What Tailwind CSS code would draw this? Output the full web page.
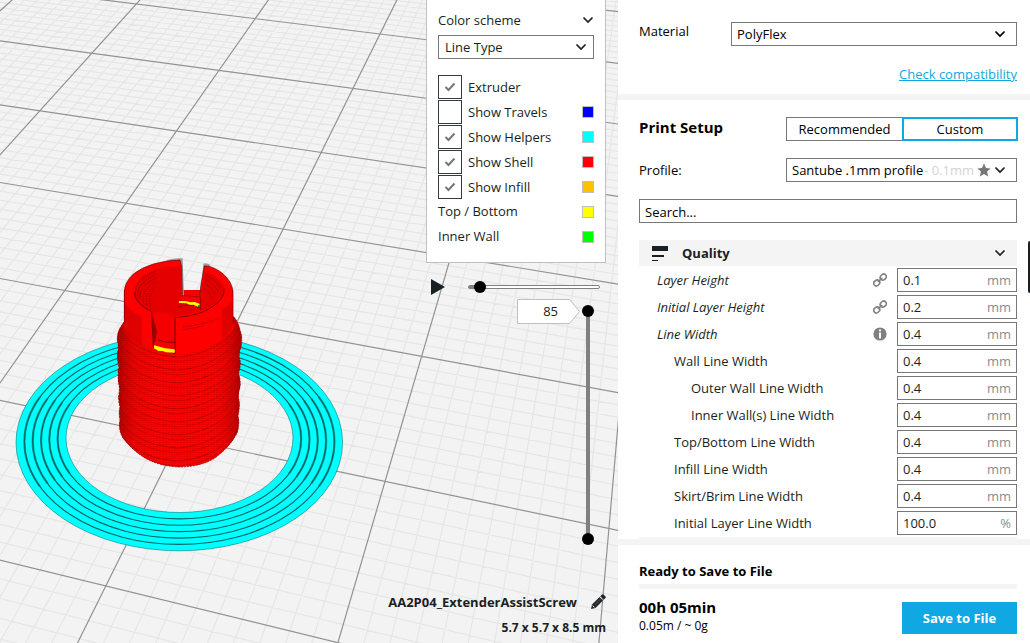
<!DOCTYPE html>
<html lang="en">
<head>
<meta charset="utf-8">
<title>Print preview</title>
<script src="https://cdn.jsdelivr.net/npm/@tailwindcss/browser@4"></script>
</head>
<body class="flex h-screen overflow-hidden bg-white font-['Open_Sans',sans-serif] text-[13px] leading-6 text-[#191f22]">
<svg class="hidden">
  <symbol id="chevron" viewBox="0 0 12 8"><path d="M1.500 1.500 6 6l4.500-4.500" fill="none" stroke="currentColor" stroke-width="1.700"/></symbol>
  <symbol id="check" viewBox="0 0 12 10"><path d="M1.500 5l3 3L10.500 1.500" fill="none" stroke="#777" stroke-width="2"/></symbol>
  <symbol id="link" viewBox="0 0 14 14"><g fill="none" stroke="#808080" stroke-width="1.600" transform="rotate(-42 7 7)"><rect x="-.6" y="4.400" width="6.400" height="5.200" rx="2.600"/><rect x="8.200" y="4.400" width="6.400" height="5.200" rx="2.600"/><path d="M4 7h6"/></g></symbol>
</svg>

<main class="relative min-w-0 flex-1 overflow-hidden bg-[#f3f3f3]">
  <svg class="absolute inset-0 h-[643px] w-[618px]" viewBox="0 0 618 643" role="img" aria-label="Sliced model on the build plate">
    <path id="minor" fill="none" stroke="#e6e6e6" stroke-width="1.200"/>
    <path id="major" fill="none" stroke="#929294" stroke-width="1.200"/>
    <path fill="#0ff" stroke="#047c7c" stroke-width=".6" fill-rule="evenodd" d="M16 442.500a163.300 108.300 0 1 0 326.600 0a163.300 108.300 0 1 0-326.600 0zM66 438a113.500 74.500 0 1 0 227 0a113.500 74.500 0 1 0-227 0z"/>
    <g id="seams" fill="none" stroke="#006464"></g>
    <defs>
      <clipPath id="bodyClip"><path d="M124 290V322Q116 332 117.500 341Q119 347 117.500 353Q117 361 119 367Q117.500 374 118.500 382Q120 388 119 394Q118 401 120 407Q118.500 414 120 420Q118 430 123 438Q132 450 145 458Q160 466.500 180 467Q202 466.500 215 458Q230 447 237 433Q240 424 238 416Q240 408 239 400Q237.500 395 240 387Q241 380 238.500 374Q241 366 240 360Q238 354 241 347Q243 338 240 330Q238 321 233 316V290Z"/></clipPath>
      <linearGradient id="side"><stop offset="0" stop-color="#500" stop-opacity=".5"/><stop offset=".14" stop-color="#a00" stop-opacity=".2"/><stop offset=".4" stop-color="red" stop-opacity="0"/><stop offset=".75" stop-color="red" stop-opacity="0"/><stop offset="1" stop-color="#500" stop-opacity=".45"/></linearGradient>
      <pattern id="layers" width="3" height="2" patternUnits="userSpaceOnUse"><path d="M0 0h2v.8H0z" fill="#a00000" opacity=".32"/></pattern>
    </defs>
    <g clip-path="url(#bodyClip)">
      <path fill="red" d="M110 280h140v195H110z"/>
      <g id="threads" fill="none"></g>
      <path fill="url(#layers)" d="M110 280h140v195H110z"/>
      <path fill="url(#side)" d="M117 280h124v190H117z"/>
    </g>
    <path fill="none" stroke="#900" stroke-width=".7" stroke-dasharray="2 1" d="M124 322Q116 332 117.500 341Q119 347 117.500 353Q117 361 119 367Q117.500 374 118.500 382Q120 388 119 394Q118 401 120 407Q118.500 414 120 420Q118 430 123 438Q132 450 145 458Q160 466.500 180 467Q202 466.500 215 458Q230 447 237 433Q240 424 238 416Q240 408 239 400Q237.500 395 240 387Q241 380 238.500 374Q241 366 240 360Q238 354 241 347Q243 338 240 330Q238 321 233 316"/>
    <svg x="100" y="250" width="160" height="120" viewBox="0 0 480 360">
      <path fill="#9c9c9c" d="M200 30Q225 24 248 25L252 140H300L310 42Q316 36 330 44L312 150H240z"/>
      <path fill="red" d="M73 230V125Q73 98 100 72Q150 33 240 30L245 50 247 137 300 141 302 110 313 48Q335 46 365 68Q398 94 399 128V240Q330 310 228 312L160 295Q95 270 73 230z"/>
      <path fill="none" stroke="#600" stroke-width="2" d="M73 220V125Q73 98 100 72Q150 33 240 30L245 50 247 137 300 141 302 110 313 48Q335 46 365 68Q398 94 399 128V220"/>
      <path fill="#e40000" d="M103 128Q103 88 150 64Q190 48 244 48L247 137 300 141 313 65Q350 72 366 99Q382 132 352 160Q310 190 226 198V285H165V245L155 188Q103 166 103 128z"/>
      <g fill="none" stroke="#760000" stroke-width="2" stroke-dasharray="5 3">
        <path d="M106 135Q103 87 165 65"/><path d="M113 139Q110 97 168 74"/><path d="M120 148Q115 105 170 84"/><path d="M130 158Q124 118 168 95"/><path d="M141 165Q132 130 166 110"/><path d="M152 172Q143 143 160 124"/>
        <path d="M316 77Q350 89 362 116"/><path d="M315 89Q345 100 354 126"/><path d="M313 101Q338 111 344 134"/><path d="M312 114Q330 124 334 142"/>
        <path d="M248 231Q310 224 360 204"/><path d="M248 240Q280 236 310 227"/>
      </g>
      <path fill="#b00000" opacity=".4" d="M75 160Q90 184 125 199V285Q90 265 75 230zM398 155V235Q370 265 365 266V180z"/>
      <path fill="red" d="M240 148 300 158V145L247 140z"/>
      <path fill="#ff0" d="M238 153l18 0 16 4 12-1 15 5v10l-15-2-2-5-14 1-8-5-24-1z"/>
      <path fill="#0a0" d="M294 165h6v6h-6z"/>
      <path fill="none" stroke="#700" stroke-width="2" d="M234 171Q270 158 300 174M301 141V180"/>
      <path fill="#f40000" d="M155 190 160 292 226 310V200Q190 182 155 190z"/>
      <path fill="#a00000" d="M157 195 171 242 166 274 160 286z"/>
      <path fill="none" stroke="#600" stroke-width="2.500" d="M103 128Q104 158 153 184M225 312V203Q305 198 348 163Q375 140 372 116M174 270Q195 279 224 277M155 188 160 291 225 310"/>
      <path fill="#ff0" d="M162 286l28 7 4 2 30 3v10l-26-1-10-4-12 0-14-8z"/>
    </svg>
  </svg>

  <div class="absolute inset-y-0 right-3 flex flex-col items-end">
    <section class="flex w-[180px] flex-col border border-t-0 border-[#c0c0c0] bg-white px-[11px] pt-2 pb-[13px]">
      <button class="flex h-6 items-center justify-between text-left">Color scheme<svg class="h-2 w-3"><use href="#chevron"/></svg></button>
      <div class="relative mt-[3px]">
        <select aria-label="Color scheme" class="block h-6 w-full appearance-none border border-[#777] bg-white px-1.5 leading-5"><option>Line Type</option></select>
        <svg class="pointer-events-none absolute top-2 right-[7px] h-2 w-3"><use href="#chevron"/></svg>
      </div>
      <div class="mt-4 flex flex-col gap-px">
        <label class="flex h-6 items-center gap-1.5"><span class="relative flex"><input type="checkbox" checked class="size-6 appearance-none border border-[#333b40] bg-white"><svg class="pointer-events-none absolute top-[7px] left-1.5 h-[10px] w-3"><use href="#check"/></svg></span>Extruder</label>
        <label class="flex h-6 items-center gap-1.5"><input type="checkbox" class="size-6 appearance-none border border-[#333b40] bg-white">Show Travels<span class="ml-auto size-3 border border-[#c0c0c0] bg-[#00f]"></span></label>
        <label class="flex h-6 items-center gap-1.5"><span class="relative flex"><input type="checkbox" checked class="size-6 appearance-none border border-[#333b40] bg-white"><svg class="pointer-events-none absolute top-[7px] left-1.5 h-[10px] w-3"><use href="#check"/></svg></span>Show Helpers<span class="ml-auto size-3 border border-[#c0c0c0] bg-[#0ff]"></span></label>
        <label class="flex h-6 items-center gap-1.5"><span class="relative flex"><input type="checkbox" checked class="size-6 appearance-none border border-[#333b40] bg-white"><svg class="pointer-events-none absolute top-[7px] left-1.5 h-[10px] w-3"><use href="#check"/></svg></span>Show Shell<span class="ml-auto size-3 border border-[#c0c0c0] bg-[#f00]"></span></label>
        <label class="flex h-6 items-center gap-1.5"><span class="relative flex"><input type="checkbox" checked class="size-6 appearance-none border border-[#333b40] bg-white"><svg class="pointer-events-none absolute top-[7px] left-1.5 h-[10px] w-3"><use href="#check"/></svg></span>Show Infill<span class="ml-auto size-3 border border-[#c0c0c0] bg-[#ffc000]"></span></label>
        <p class="flex h-6 items-center justify-between leading-[22px]"><span class="pb-0.5">Top / Bottom</span><span class="size-3 border border-[#c0c0c0] bg-[#ff0]"></span></p>
        <p class="flex h-6 items-center justify-between leading-[22px]"><span class="pb-0.5">Inner Wall</span><span class="size-3 border border-[#c0c0c0] bg-[#0f0]"></span></p>
      </div>
    </section>

    <div class="mt-4 mr-1.5 flex items-center gap-[23px]">
      <button aria-label="Play" class="block"><svg class="h-4 w-[14px]" viewBox="0 0 14 16"><path d="M0 0v16l14-8z" fill="#191f22"/></svg></button>
      <div class="relative h-3 w-[132px]">
        <div class="mt-1 h-[4px] rounded-full border border-[#808080] bg-white"><div class="h-full w-1.5 bg-[#808080]"></div></div>
        <span class="absolute top-0 left-1.5 size-3 rounded-full bg-black"></span>
        <input type="range" aria-label="Path position" min="0" max="100" value="5" class="absolute inset-0 w-full opacity-0">
      </div>
    </div>

    <div class="mt-1 mr-3 flex items-start">
      <div class="relative">
        <svg class="h-[25px] w-[65px]" viewBox="0 0 65 25"><path d="M.5.500h52l10 12-10 12H.5z" fill="#fff" stroke="#c0c0c0"/></svg>
        <input aria-label="Layer" value="85" class="absolute top-0 left-0 h-6 w-[41px] bg-transparent text-right outline-none">
      </div>
      <div class="relative mt-1.5 flex h-[240px] w-3 flex-col items-center py-1.5">
        <div class="w-1 flex-1 bg-[#808080]"></div>
        <span class="absolute top-0 left-0 size-3 rounded-full bg-black"></span>
        <span class="absolute bottom-0 left-0 size-3 rounded-full bg-black"></span>
        <input type="range" aria-label="Visible layers" min="0" max="85" value="85" class="absolute inset-0 h-full w-3 opacity-0">
      </div>
    </div>

    <div class="mt-auto pb-[3px] text-right font-bold">
      <div class="flex items-center justify-end gap-[13px]">AA2P04_ExtenderAssistScrew
        <button aria-label="Rename"><svg class="block size-4" viewBox="0 0 16 16" fill="#22282c"><path d="M1 15l1-4.500L9.500 3l3.500 3.500L5.500 14z"/><path d="M10.200 2.300 12 .5q.8-.6 1.500 0l2 2q.6.700 0 1.500L13.700 5.800z"/><path d="M2.600 11.600l1.800 1.800" stroke="#f3f3f3" stroke-width="1"/><path d="M5 10.500 10 5.500" stroke="#777" stroke-width=".7"/></svg></button>
      </div>
      <p class="mt-0.5 text-[12px]">5.7 x 5.7 x 8.5 mm</p>
    </div>
  </div>
</main>

<aside class="relative flex w-2/5 flex-col text-black">
  <section class="pt-[22px] pr-[13px] pb-[7px] pl-[21px]">
    <div class="flex">
      <label for="material" class="w-[92px] leading-[18px]">Material</label>
      <div class="relative flex-1">
        <select id="material" class="block h-6 w-full appearance-none border border-[#777] bg-white px-[5px] leading-5"><option>PolyFlex</option></select>
        <svg class="pointer-events-none absolute top-2 right-[11px] h-2 w-3"><use href="#chevron"/></svg>
      </div>
    </div>
    <p class="mt-4 text-right"><a href="#" class="text-[#0fa8e2] underline">Check compatibility</a></p>
  </section>
  <div class="mt-px h-1.5 bg-[#f4f4f4]"></div>

  <section class="flex flex-col pt-[17px] pr-[13px] pl-[21px]">
    <div class="flex justify-between">
      <h2 class="text-[15px] leading-5 font-bold">Print Setup</h2>
      <div class="-mr-px flex">
        <button class="h-6 w-[116px] border border-r-0 border-[#777] leading-5">Recommended</button>
        <button class="h-6 w-[116px] border-2 border-[#0fa8e2] leading-5">Custom</button>
      </div>
    </div>
    <div class="mt-[17px] flex justify-between">
      <label for="profile">Profile:</label>
      <div class="relative w-[231px]">
        <select id="profile" class="block h-6 w-full appearance-none border border-[#777] bg-white px-[5px] leading-5"><option>Santube .1mm profile</option></select>
        <div class="pointer-events-none absolute inset-y-0 right-[11px] flex items-center gap-[3px] text-[#d3d3d3]">- 0.1mm
          <svg class="size-[14px]" viewBox="0 0 14 14"><path fill="#777" d="M7 .5l2 4.400 4.600.5-3.500 3.200 1 4.900L7 11l-4.100 2.500 1-4.900L.4 5.400 5 4.900z"/></svg>
          <svg class="h-2 w-3 text-[#191f22]"><use href="#chevron"/></svg>
        </div>
      </div>
    </div>
    <input type="text" aria-label="Search settings" placeholder="Search..." class="mt-[17px] h-6 border border-[#777] px-[5px] pt-0.5 placeholder:text-black">

    <button class="mt-[17px] flex h-[26px] items-center bg-[#f4f4f4] pr-[11px] pl-[13px] font-bold text-[#191f22]">
      <svg class="mr-[14px] h-[15px] w-4" viewBox="0 0 16 15" fill="#191f22"><path d="M0 0h16v5H0zM0 9h12v2H0zM0 14h6v1H0z"/></svg>Quality
      <svg class="ml-auto h-2 w-3"><use href="#chevron"/></svg>
    </button>
    <div id="settings" class="mt-0.5 flex flex-col gap-[3px] text-[#191f22]"></div>
    <div class="mt-0.5 h-0.5 bg-[#f4f4f4]"></div>
  </section>
  <div class="h-1.5 bg-[#f4f4f4]"></div>

  <section class="pt-[14px] pr-[13px] pl-[21px]">
    <h2 class="font-bold">Ready to Save to File</h2>
    <div class="mt-px h-[5px] bg-[#f4f4f4]"></div>
    <div class="flex items-start justify-between pt-2">
      <div><p class="text-[15px] leading-5 font-bold">00h 05min</p><p class="text-[12px] leading-[18px]">0.05m / ~ 0g</p></div>
      <button class="mt-[5px] h-8 w-[115px] bg-[#0fa8e2] font-bold text-white">Save to File</button>
    </div>
  </section>
  <span class="absolute top-[241px] right-0 h-[52px] w-0.5 rounded-l-sm bg-[#191f22]"></span>
</aside>

<script type="module">
  // Perspective projection of build plate coordinates (in 10 mm cells) to the view.
  const project = (u, v) => {
    const d = 1 - 0.025 * u - 0.0756 * v;
    return ((380 + 118.4 * u - 53.7 * v) / d).toFixed(1) + ' ' + ((34 + 14.9 * u + 47.7 * v) / d).toFixed(1);
  };
  let major = '', minor = '';
  for (let i = -80; i <= 90; i++) {
    const v = i / 10;
    const line = 'M' + project(-8, v) + 'L' + project(4, v);
    if (i % 10) minor += line; else major += line;
  }
  for (let i = -70; i <= 60; i++) {
    const u = i / 10;
    const line = 'M' + project(u, -8) + 'L' + project(u, 8);
    if (i % 10) minor += line; else major += line;
  }
  document.getElementById('minor').setAttribute('d', minor);
  document.getElementById('major').setAttribute('d', major);

  let seams = '';
  for (let k = 1; k < 6; k++) {
    const t = k / 6, rx = 163.3 - 49.8 * t, ry = 108.3 - 33.8 * t, cy = 442.5 - 4.5 * t;
    seams += `<ellipse cx="179.400" cy="${cy}" rx="${rx}" ry="${ry}" stroke-width="1.200"/>`;
    seams += `<path stroke-width="2.200" stroke-opacity=".6" d="M${179.4 - rx * .9} ${cy - ry * .436}A${rx} ${ry} 0 0 0 ${179.4 - rx * .9} ${cy + ry * .436}M${179.4 + rx * .9} ${cy - ry * .436}A${rx} ${ry} 0 0 1 ${179.4 + rx * .9} ${cy + ry * .436}"/>`;
  }
  document.getElementById('seams').innerHTML = seams;

  let threads = '';
  for (let k = 0; k < 9; k++) {
    const y = 323 + k * 13;
    threads += `<path stroke="#b00000" stroke-width="1" stroke-dasharray="7 1" d="M117 ${y + 2}Q133 ${y + 31} 178 ${y + 34}Q224 ${y + 30} 242 ${y - 5}"/>`;
    threads += `<path stroke="#ff0000" stroke-width="3" d="M116 ${y + 4}Q133 ${y + 34} 178 ${y + 37}Q224 ${y + 33} 243 ${y - 3}"/>`;
    threads += `<path stroke="#c80000" stroke-width="1" stroke-dasharray="4 1" d="M117 ${y + 7}Q133 ${y + 36} 178 ${y + 39}Q224 ${y + 35} 242 ${y}"/>`;
  }
  document.getElementById('threads').innerHTML = threads;

  const linked = '<svg class="size-[14px]" role="img" aria-label="Linked"><use href="#link"/></svg>';
  const info = '<svg class="size-[14px]" viewBox="0 0 14 14" role="img" aria-label="Info"><circle cx="7" cy="7" r="6.600" fill="#808080"/><path d="M6 2.500h2v1.800H6zM6 5.500h2v6H6z" fill="#fff"/></svg>';
  const main = 'pl-[18px] italic', sub = 'pl-[35px]', leaf = 'pl-[52px]';
  document.getElementById('settings').innerHTML = [
    ['Layer Height', main, '0.1', 'mm', linked],
    ['Initial Layer Height', main, '0.2', 'mm', linked],
    ['Line Width', main, '0.4', 'mm', info],
    ['Wall Line Width', sub, '0.4', 'mm', ''],
    ['Outer Wall Line Width', leaf, '0.4', 'mm', ''],
    ['Inner Wall(s) Line Width', leaf, '0.4', 'mm', ''],
    ['Top/Bottom Line Width', sub, '0.4', 'mm', ''],
    ['Infill Line Width', sub, '0.4', 'mm', ''],
    ['Skirt/Brim Line Width', sub, '0.4', 'mm', ''],
    ['Initial Layer Line Width', sub, '100.0', '%', '']
  ].map(([name, indent, value, unit, icon], i) => `
    <div class="flex h-6 items-center">
      <label for="setting-${i}" class="flex-1 ${indent}">${name}</label>
      <span class="mr-[10px]">${icon}</span>
      <div class="relative w-[120px]">
        <input id="setting-${i}" value="${value}" class="block h-6 w-full border border-[#777] bg-white px-[5px]">
        <span class="pointer-events-none absolute inset-y-0 right-1.5 text-[#8c8c8c]">${unit}</span>
      </div>
    </div>`).join('');
</script>
</body>
</html>
